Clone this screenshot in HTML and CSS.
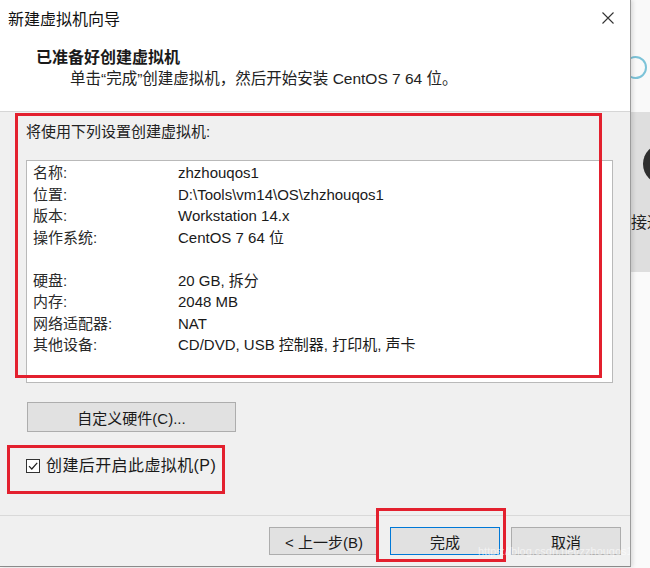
FILE: index.html
```html
<!DOCTYPE html>
<html lang="zh-CN">
<head>
<meta charset="utf-8">
<title>新建虚拟机向导</title>
<link rel="stylesheet" href="styles.css">
</head>
<body>
<div class="screen">
  <div class="dialog">
    <div class="titlebar">
      <span class="title">新建虚拟机向导</span>
      <svg class="close" width="12" height="12" viewBox="0 0 12 12"><path d="M0.5 0.5 L11.5 11.5 M11.5 0.5 L0.5 11.5" stroke="#333" stroke-width="1.1" fill="none"/></svg>
    </div>
    <div class="header">
      <div class="heading">已准备好创建虚拟机</div>
      <div class="subtext">单击“完成”创建虚拟机，然后开始安装 CentOS 7 64 位。</div>
    </div>
    <div class="body">
      <div class="intro">将使用下列设置创建虚拟机:</div>
      <div class="summary">
        <div class="label">名称:</div><div class="value">zhzhouqos1</div>
        <div class="label">位置:</div><div class="value">D:\Tools\vm14\OS\zhzhouqos1</div>
        <div class="label">版本:</div><div class="value">Workstation 14.x</div>
        <div class="label">操作系统:</div><div class="value">CentOS 7 64 位</div>
        <div class="label blank">&nbsp;</div><div class="value blank">&nbsp;</div>
        <div class="label">硬盘:</div><div class="value">20 GB, 拆分</div>
        <div class="label">内存:</div><div class="value">2048 MB</div>
        <div class="label">网络适配器:</div><div class="value">NAT</div>
        <div class="label">其他设备:</div><div class="value">CD/DVD, USB 控制器, 打印机, 声卡</div>
      </div>
      <button class="btn custom">自定义硬件(C)...</button>
      <label class="check">
        <span class="box"><svg width="12" height="12" viewBox="0 0 12 12"><path d="M2 6.2 L4.8 9 L10.2 2.8" stroke="#222" stroke-width="1.2" fill="none"/></svg></span>
        <span class="check-text">创建后开启此虚拟机(P)</span>
      </label>
    </div>
    <div class="footer">
      <button class="btn nav">&lt; 上一步(B)</button>
      <button class="btn nav primary">完成</button>
      <button class="btn nav">取消</button>
    </div>
    <div class="mark mark-settings"></div>
    <div class="mark mark-check"></div>
    <div class="mark mark-finish"></div>
    <div class="watermark">https://blog.csdn.net/zzhouqos1325</div>
  </div>
  <div class="side">
    <div class="side-top"><span class="ring"></span></div>
    <div class="side-panel">
      <span class="dot"></span>
      <span class="side-text">接通</span>
    </div>
    <div class="side-bottom"></div>
  </div>
</div>
</body>
</html>
```
FILE: styles.css
```css
* { box-sizing: border-box; }
html, body { margin: 0; padding: 0; }
body {
  width: 650px;
  height: 568px;
  overflow: hidden;
  background: #f7f7f7;
  font-family: "Liberation Sans", "Noto Sans CJK SC", sans-serif;
  color: #1a1a1a;
}
.screen {
  display: flex;
  width: 650px;
  height: 568px;
}
.dialog {
  position: relative;
  width: 631px;
  height: 567px;
  flex: none;
  background: #f0f0f0;
  border-right: 1px solid #9c9c9c;
  border-bottom: 1px solid #8a8a8a;
  display: flex;
  flex-direction: column;
  z-index: 1;
  overflow: hidden;
  box-shadow: 2px 0 4px rgba(0,0,0,0.12);
}
.titlebar {
  height: 36px;
  background: #fff;
  display: flex;
  align-items: center;
  justify-content: space-between;
  padding: 0 16px 0 8px;
}
.title {
  font-family: "Noto Sans CJK SC", sans-serif;
  font-size: 16px;
  line-height: 20px;
  color: #111;
}
.close { display: block; }
.header {
  height: 76px;
  background: #fff;
  border-bottom: 1px solid #d6d6d6;
  padding-top: 9px;
}
.heading {
  font-family: "Noto Sans CJK SC", sans-serif;
  font-weight: 700;
  font-size: 16px;
  line-height: 22px;
  padding-left: 36px;
}
.subtext {
  font-size: 15.5px;
  line-height: 23px;
  padding-left: 70px;
  color: #222;
}
.body {
  height: 403px;
  padding: 10px 0 0 26px;
  display: flex;
  flex-direction: column;
  align-items: flex-start;
}
.intro {
  font-size: 15px;
  line-height: 20px;
  color: #222;
}
.summary {
  margin-top: 18px;
  width: 587px;
  height: 223px;
  background: #fff;
  border: 1px solid #b9b9b9;
  padding: 1px 0 0 6px;
  display: grid;
  grid-template-columns: 145px 1fr;
  grid-auto-rows: 21.5px;
  font-size: 15px;
  align-content: start;
}
.label, .value {
  line-height: 21.5px;
  white-space: nowrap;
}
.label { color: #2a2a2a; }
.btn {
  font-family: "Liberation Sans", "Noto Sans CJK SC", sans-serif;
  font-size: 15px;
  color: #1a1a1a;
  background: #e1e1e1;
  border: 1px solid #adadad;
  padding: 0;
  margin: 0;
}
.custom {
  margin-top: 19px;
  margin-left: 1px;
  width: 209px;
  height: 30px;
}
.check {
  margin-top: 24px;
  display: flex;
  align-items: center;
  gap: 6px;
}
.box {
  width: 14px;
  height: 14px;
  border: 1px solid #333;
  background: #fff;
  display: flex;
  align-items: center;
  justify-content: center;
}
.box svg { display: block; }
.check-text {
  font-size: 16px;
  line-height: 20px;
  letter-spacing: 0.4px;
}
.footer {
  flex: 1;
  border-top: 1px solid #d9d9d9;
  display: flex;
  justify-content: flex-end;
  align-items: flex-start;
  gap: 11px;
  padding: 11px 9px 0 0;
}
.nav {
  width: 110px;
  height: 28px;
  font-size: 15px;
}
.primary {
  border: 1px solid #0078d7;
  box-shadow: inset 0 0 0 1px #e1e1e1;
}
.mark {
  position: absolute;
  border: 3px solid #e3202e;
  pointer-events: none;
}
.mark-settings { left: 15px; top: 113px; width: 587px; height: 265px; }
.mark-check { left: 7px; top: 445px; width: 218px; height: 49px; }
.mark-finish { left: 376px; top: 508px; width: 130px; height: 54px; }
.watermark {
  position: absolute;
  left: 478px;
  top: 545px;
  font-size: 11px;
  line-height: 13px;
  color: rgba(255,255,255,0.6);
  white-space: nowrap;
  pointer-events: none;
}
.side {
  width: 19px;
  flex: none;
  display: flex;
  flex-direction: column;
  overflow: hidden;
}
.side-top {
  position: relative;
  height: 112px;
  background: #f9f9f9;
}
.ring {
  position: absolute;
  left: -7px;
  top: 56px;
  width: 23px;
  height: 23px;
  border: 2px solid #7cc3d8;
  border-radius: 50%;
}
.side-panel {
  position: relative;
  height: 160px;
  background: #dedede;
}
.dot {
  position: absolute;
  left: 12px;
  top: 32px;
  width: 40px;
  height: 40px;
  border-radius: 50%;
  background: #2e2e2e;
}
.side-text {
  position: absolute;
  left: 0;
  top: 99px;
  font-family: "Noto Sans CJK SC", sans-serif;
  font-size: 16px;
  line-height: 20px;
  white-space: nowrap;
  color: #222;
}
.side-bottom {
  flex: 1;
  background: #fafafa;
}
```
